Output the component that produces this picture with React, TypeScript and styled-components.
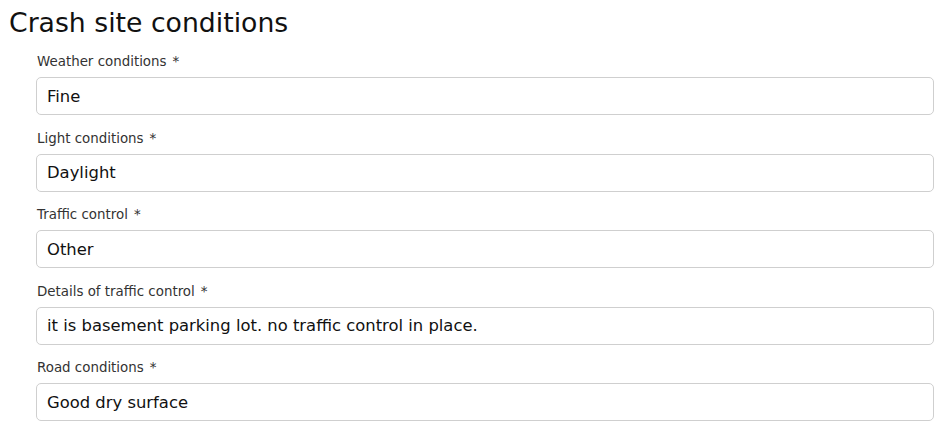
import React from 'react';
import styled, { createGlobalStyle } from 'styled-components';

const GlobalStyle = createGlobalStyle`
  body {
    margin: 0;
    background: #ffffff;
    font-family: 'DejaVu Sans', Verdana, sans-serif;
  }
`;

const Page = styled.div`
  padding: 7px 6px 0 9px;
`;

const Title = styled.h2`
  font-size: 26.7px;
  font-weight: normal;
  color: #111;
  margin: 0 0 15px;
  line-height: 32px;
`;

const Form = styled.div`
  display: flex;
  flex-direction: column;
  gap: 15.5px;
  padding-left: 27px;
`;

const Field = styled.div`
  display: flex;
  flex-direction: column;
  gap: 7px;
`;

const Label = styled.label`
  font-size: 13.4px;
  line-height: 16px;
  color: #333;
  padding-left: 1px;

  span {
    margin-left: 6px;
  }
`;

const Input = styled.div`
  box-sizing: border-box;
  height: 38px;
  display: flex;
  align-items: center;
  padding: 0 10px;
  border: 1px solid #cfcfcf;
  border-radius: 5px;
  font-size: 16.4px;
  color: #111;
`;

const fields = [
  { label: 'Weather conditions', value: 'Fine' },
  { label: 'Light conditions', value: 'Daylight' },
  { label: 'Traffic control', value: 'Other' },
  { label: 'Details of traffic control', value: 'it is basement parking lot. no traffic control in place.' },
  { label: 'Road conditions', value: 'Good dry surface' },
];

const App: React.FC = () => {
  return (
    <Page>
      <GlobalStyle />
      <Title>Crash site conditions</Title>
      <Form>
        {fields.map((f) => (
          <Field key={f.label}>
            <Label>
              {f.label}
              <span>*</span>
            </Label>
            <Input>{f.value}</Input>
          </Field>
        ))}
      </Form>
    </Page>
  );
};

export default App;
